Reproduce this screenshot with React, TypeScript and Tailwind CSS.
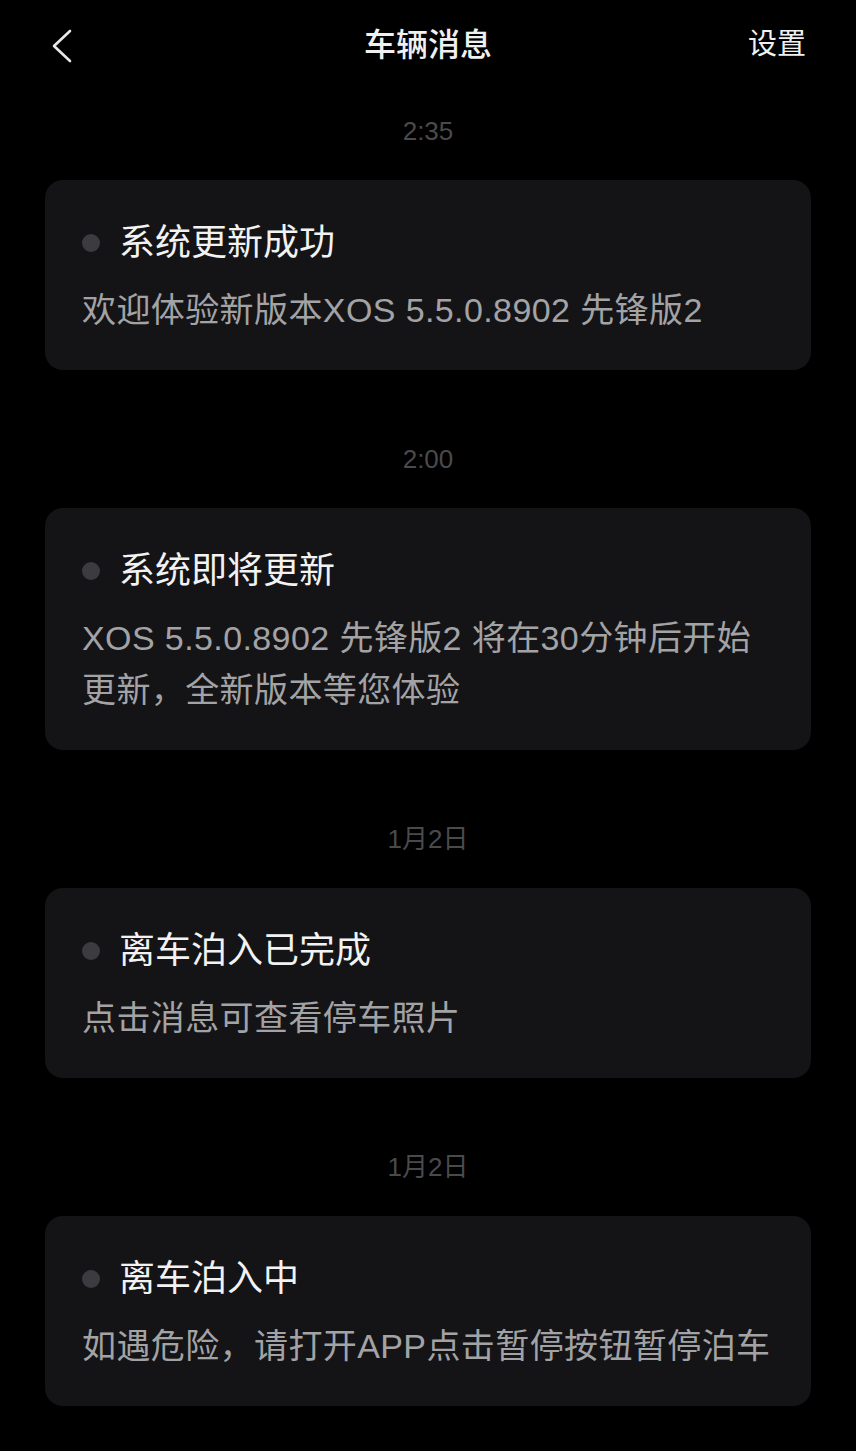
const messages = [
  {
    time: "2:35",
    title: "系统更新成功",
    body: "欢迎体验新版本XOS 5.5.0.8902 先锋版2",
  },
  {
    time: "2:00",
    title: "系统即将更新",
    body: "XOS 5.5.0.8902 先锋版2 将在30分钟后开始更新，全新版本等您体验",
  },
  {
    time: "1月2日",
    title: "离车泊入已完成",
    body: "点击消息可查看停车照片",
  },
  {
    time: "1月2日",
    title: "离车泊入中",
    body: "如遇危险，请打开APP点击暂停按钮暂停泊车",
  },
];

function BackIcon() {
  return (
    <svg width="24" height="36" viewBox="0 0 24 36" fill="none">
      <polyline
        points="20,3 4,18 20,33"
        stroke="#e8e8e8"
        strokeWidth="2.6"
        strokeLinecap="round"
        strokeLinejoin="round"
      />
    </svg>
  );
}

type MessageCardProps = {
  title: string;
  body: string;
};

function MessageCard({ title, body }: MessageCardProps) {
  return (
    <div className="rounded-[18px] bg-[#141417] pl-[37px] pr-[36px] pt-[39px] pb-[34px]">
      <div className="flex items-center gap-[19px]">
        <span className="h-[18px] w-[18px] shrink-0 rounded-full bg-[#3b3b40]" />
        <h3 className="text-[36px] leading-[48px] text-[#f2f2f2]">{title}</h3>
      </div>
      <p className="mt-[17px] text-[34px] leading-[52px] tracking-[0.4px] text-[#a3a3a6]">
        {body}
      </p>
    </div>
  );
}

export default function App() {
  return (
    <div className="min-h-[1451px] w-full bg-black font-['Liberation_Sans','Noto_Sans_CJK_SC',sans-serif]">
      <header className="grid h-[90px] grid-cols-[1fr_auto_1fr] items-center">
        <div className="pl-[50px] pt-[1px]">
          <BackIcon />
        </div>
        <h1 className="text-[32px] font-medium text-[#f0f0f0]">车辆消息</h1>
        <div className="pr-[50px] text-right text-[29px] text-[#f0f0f0]">
          设置
        </div>
      </header>

      <main className="px-[45px] pt-[23px] pb-[45px]">
        {messages.map((message, index) => (
          <section key={index} className={index > 0 ? "mt-[71px]" : ""}>
            <div className="text-center text-[26px] leading-[36px] text-[#4a4a4c]">
              {message.time}
            </div>
            <div className="mt-[31px]">
              <MessageCard title={message.title} body={message.body} />
            </div>
          </section>
        ))}
      </main>
    </div>
  );
}
